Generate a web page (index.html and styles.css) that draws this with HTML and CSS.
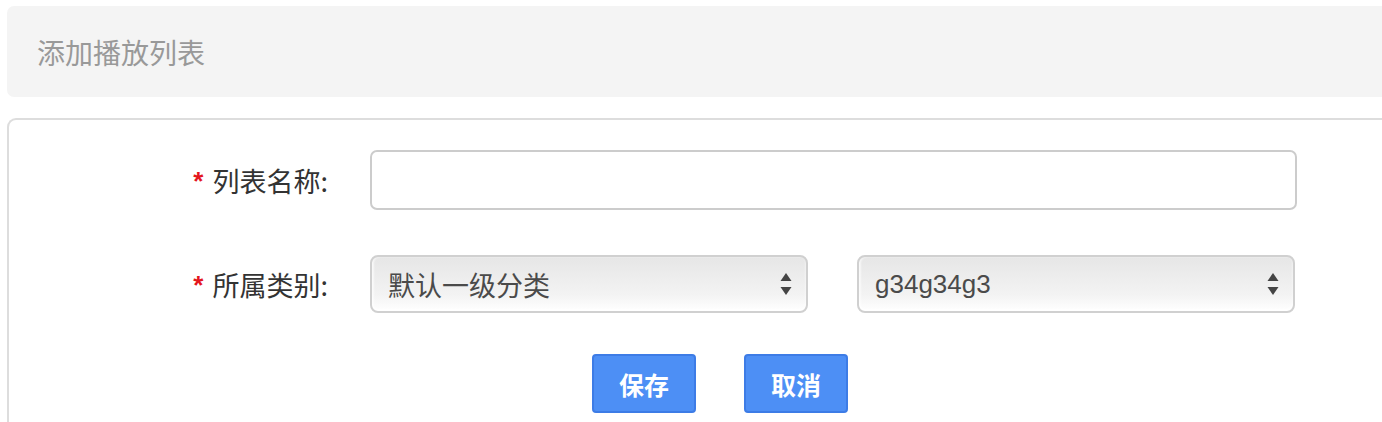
FILE: index.html
```html
<!DOCTYPE html>
<html lang="zh-CN">
<head>
    <meta charset="UTF-8">
    <meta name="viewport" content="width=device-width, initial-scale=1.0">
    <title>添加播放列表</title>
    <link rel="stylesheet" href="styles.css">
</head>
<body>

    <div class="page">
        <header class="page-head">
            <h1>添加播放列表</h1>
        </header>

        <section class="panel">
            <form id="playlist-form">
                <div class="form-row">
                    <label for="name"><span class="req">*</span> 列表名称:</label>
                    <input type="text" id="name" name="name" class="field-wide">
                </div>

                <div class="form-row">
                    <label for="cat1"><span class="req">*</span> 所属类别:</label>
                    <select id="cat1" name="cat1" class="field-half">
                        <option>默认一级分类</option>
                    </select>
                    <select id="cat2" name="cat2" class="field-half field-latin">
                        <option>g34g34g3</option>
                    </select>
                </div>

                <div class="form-actions">
                    <button type="button" class="btn">保存</button>
                    <button type="button" class="btn">取消</button>
                </div>
            </form>
        </section>
    </div>

</body>
</html>
```

FILE: styles.css
```css
html, body {
    margin: 0;
    overflow: hidden;
    background: #fff;
}

body {
    font-family: "Noto Sans CJK SC", "Liberation Sans", sans-serif;
    color: #333;
}

.page {
    padding: 6px 0 0 7px;
    margin-right: -30px;
}

.page-head {
    background-color: #f4f4f4;
    border-radius: 7px;
    height: 91px;
    display: flex;
    align-items: center;
    padding-left: 30px;
}

.page-head h1 {
    margin: 0;
    font-size: 28px;
    font-weight: normal;
    color: #999;
}

.panel {
    margin-top: 21px;
    border: 2px solid #ddd;
    border-right: none;
    border-bottom: none;
    border-radius: 9px 0 0 0;
    padding: 30px 0 9px;
}

.form-row {
    display: flex;
    align-items: center;
    margin-bottom: 45px;
}

.form-row label {
    width: 319px;
    margin-right: 42px;
    text-align: right;
    font-size: 27px;
    color: #333;
}

.req {
    display: inline-block;
    color: #e4161d;
    font-family: "Liberation Sans", sans-serif;
    font-size: 26px;
    font-weight: bold;
    margin-right: 3px;
    vertical-align: 2px;
}

.field-wide {
    width: 927px;
    height: 60px;
    box-sizing: border-box;
    border: 2px solid #ccc;
    border-radius: 7px;
    font-size: 26px;
    padding: 0 16px;
    outline: none;
}

.field-half {
    -webkit-appearance: none;
    appearance: none;
    width: 438px;
    height: 58px;
    box-sizing: border-box;
    border: 2px solid #d0d0d0;
    border-radius: 8px;
    padding: 0 16px;
    font-family: "Noto Sans CJK SC", "Liberation Sans", sans-serif;
    font-size: 27px;
    color: #4a4a4a;
    background-image:
        url("data:image/svg+xml;utf8,<svg xmlns='http://www.w3.org/2000/svg' width='12' height='22' viewBox='0 0 12 22'><path d='M6 0L11.5 8H0.5Z' fill='%23444'/><path d='M6 22L11.5 14H0.5Z' fill='%23444'/></svg>"),
        linear-gradient(#e6e6e6, #f3f3f3 70%, #fff);
    background-repeat: no-repeat, no-repeat;
    background-position: right 14px center, 0 0;
    background-size: 12px 22px, 100% 100%;
    box-shadow: inset 0 -2px 3px rgba(255, 255, 255, 0.8), inset 2px 0 2px rgba(255, 255, 255, 0.6);
}

.field-half + .field-half {
    margin-left: 49px;
}

.field-latin {
    font-family: "Liberation Sans", Arial, sans-serif;
    font-size: 26px;
}

.form-actions {
    display: flex;
    gap: 48px;
    margin-top: -4px;
    padding-left: 583px;
}

.btn {
    width: 104px;
    height: 59px;
    background-color: #4d8ff5;
    border: 2px solid #3d7ce6;
    border-radius: 4px;
    color: #fff;
    font-family: "Noto Sans CJK SC", sans-serif;
    font-size: 25px;
    font-weight: bold;
    cursor: pointer;
}

.btn:hover {
    background-color: #3f80ea;
}
```
